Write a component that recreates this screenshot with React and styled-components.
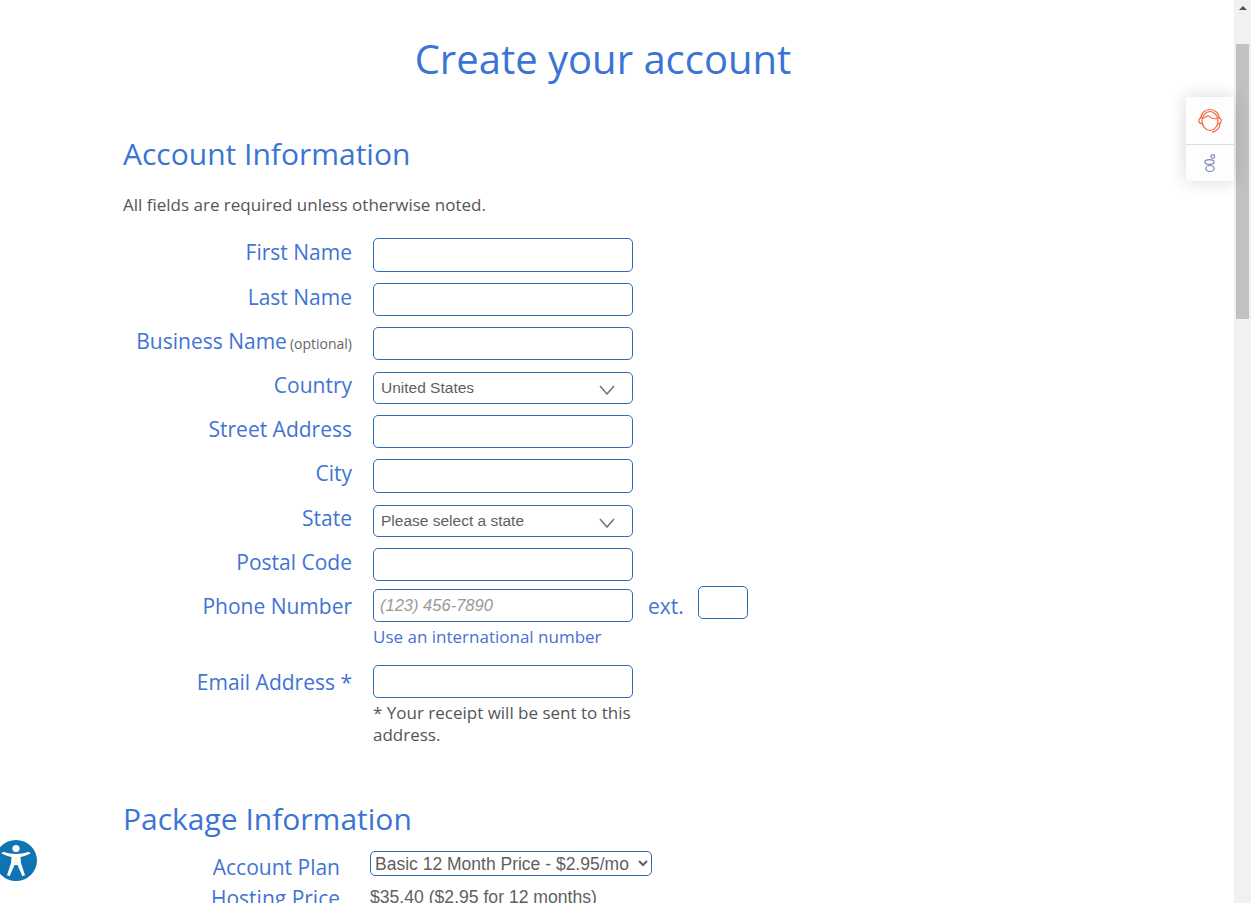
import React from 'react'
import styled, { createGlobalStyle } from 'styled-components'

const GlobalStyle = createGlobalStyle`
html, body {
  margin: 0;
  height: 100%;
  overflow: hidden;
  background: #fff;
}
* { box-sizing: border-box; }
`
const Page = styled.div`
width: 1234px;
height: 903px;
overflow: hidden;
font-family: "Open Sans", sans-serif;
color: #555;
`
const Container = styled.main`
width: 960px;
margin-left: 123px;
`
const Title = styled.h1`
margin: 0;
padding-top: 32px;
height: 133px;
text-align: center;
font-size: 40px;
line-height: 54px;
font-weight: 400;
color: #3a74d4;
`
const SectionTitle = styled.h2`
margin: 0;
font-size: 30px;
line-height: 41px;
font-weight: 400;
color: #3a74d4;
`
const Note = styled.p`
margin: 0;
padding-top: 19px;
height: 64px;
font-size: 17px;
line-height: 23px;
color: #555;
`
const Row = styled.div`
display: grid;
grid-template-columns: 229px 260px auto;
column-gap: 21px;
align-items: start;
height: ${p => p.$height}px;
`
const Label = styled.label`
text-align: right;
font-size: 21px;
line-height: 28px;
color: #3f74d4;
margin-top: ${p => p.$top || 0}px;
`
const Optional = styled.span`
font-size: 14px;
color: #666;
margin-left: 3px;
`
const Input = styled.input`
display: block;
width: 260px;
height: ${p => p.$height || 33}px;
border: 1px solid #2e6db4;
border-radius: 5px;
background: #fff;
padding: 0 6px;
outline: none;
font-family: "Liberation Sans", sans-serif;
font-size: 16.5px;
&::placeholder {
  font-style: italic;
  color: #999;
  opacity: 1;
}
`
const SelectBox = styled.div`
position: relative;
width: 260px;
height: 32px;
`
const FlatSelect = styled.select`
appearance: none;
display: block;
width: 100%;
height: 100%;
border: 1px solid #2e6db4;
border-radius: 5px;
background: #fff;
padding: 0 7px 2px;
font-family: "Liberation Sans", sans-serif;
font-size: 15.5px;
color: #5f5f5f;
outline: none;
`
const Chevron = styled.svg`
position: absolute;
right: 18px;
top: 13px;
width: 16px;
height: 10px;
pointer-events: none;
`
const PhoneColumn = styled.div`
display: flex;
flex-direction: column;
`
const IntlLink = styled.a`
font-size: 17px;
line-height: 22px;
margin-top: 4px;
color: #4a6fd4;
`
const ExtGroup = styled.div`
display: flex;
gap: 14px;
margin-left: -6px;
margin-top: -3px;
`
const ExtLabel = styled.span`
font-size: 21px;
line-height: 40px;
color: #3f74d4;
`
const ExtInput = styled(Input)`
width: 50px;
`
const Hint = styled.p`
margin: 4px 0 0;
font-size: 17px;
line-height: 22px;
color: #555;
`
const PackageSection = styled.section`
padding-top: 43px;
`
const PlanRow = styled.div`
display: grid;
grid-template-columns: 217px auto;
column-gap: 30px;
align-items: start;
margin-top: ${p => p.$top || 0}px;
`
const PlanLabel = styled.div`
text-align: right;
font-size: 21px;
line-height: 30px;
color: #3f74d4;
padding-top: 1px;
`
const PlanSelect = styled.select`
display: block;
width: 282px;
height: 25px;
border: 1px solid #2e6db4;
border-radius: 5px;
background: #fff;
font-family: "Liberation Sans", sans-serif;
font-size: 17.5px;
color: #5f5f5f;
outline: none;
`
const PlanValue = styled.div`
padding-top: 3px;
font-family: "Liberation Sans", sans-serif;
font-size: 17.6px;
line-height: 24px;
color: #5f5f5f;
`
const Scrollbar = styled.div`
position: fixed;
top: 0;
right: 0;
width: 17px;
height: 903px;
background: #f1f1f1;
`
const ScrollArrow = styled.div`
margin: 6px auto 0;
width: 0;
height: 0;
border-left: 4px solid transparent;
border-right: 4px solid transparent;
border-bottom: 4px solid #505050;
`
const ScrollThumb = styled.div`
margin: 34px 2px 0;
height: 275px;
background: #c1c1c1;
`
const SideWidget = styled.aside`
position: fixed;
top: 97px;
left: 1186px;
width: 48px;
height: 84px;
background: #fdfdfe;
box-shadow: 0 0 18px rgba(0, 0, 0, 0.16);
`
const WidgetCell = styled.div`
height: ${p => p.$height}px;
display: flex;
align-items: center;
justify-content: center;
border-bottom: ${p => (p.$divided ? '1px solid #d8dfea' : 'none')};
`
const A11yButton = styled.div`
position: fixed;
left: -5px;
top: 840px;
width: 42px;
height: 41px;
`

const fields = [
  { label: 'First Name', height: 45, inputHeight: 34 },
  { label: 'Last Name', height: 44 },
  { label: 'Business Name', optional: true, height: 45 },
  { label: 'Country', select: 'United States', height: 43 },
  { label: 'Street Address', height: 44 },
  { label: 'City', height: 46, inputHeight: 34 },
  { label: 'State', select: 'Please select a state', height: 43 },
  { label: 'Postal Code', height: 41 }
]

const Headset = () => (
  <svg width="26" height="26" viewBox="0 0 26 26" fill="none" stroke="#f2683f" strokeWidth="1.2">
    <path d="M3.5 11 C4 5 8 1.5 13 1.5 C18 1.5 22 5 22.5 11" />
    <ellipse cx="13" cy="13" rx="8" ry="9.5" />
    <path d="M5.2 10.5 C8 10 10 7 12 8 C14 10.5 18 11 21 10.5" />
    <path d="M4.5 9.5 C2.5 10.5 1.5 12.5 2 14 C2.4 15.3 3.5 15.7 5 15.5" />
    <path d="M21.5 9.5 C23.5 10.5 24.5 12.5 24 14 C23.6 15.3 22.5 15.7 21 15.5" />
    <path d="M23 15.5 C22.8 20 19.5 24 15 24.2" />
  </svg>
)

const ChatBubbles = () => (
  <svg width="12" height="19" viewBox="0 0 12 19" fill="none" stroke="#7d89b3" strokeWidth="1.2">
    <circle cx="8.8" cy="2.4" r="1.8" />
    <ellipse cx="5.5" cy="8" rx="4.6" ry="2.4" />
    <ellipse cx="6" cy="14.5" rx="4.2" ry="3" />
  </svg>
)

const AccessIcon = () => (
  <svg width="42" height="41" viewBox="0 0 42 41">
    <ellipse cx="21" cy="20.5" rx="21" ry="20.5" fill="#0f74b3" />
    <circle cx="21" cy="8.5" r="3.6" fill="#fff" />
    <path
      fill="#fff"
      d="M6.5 13.5 L8 11.8 C13 13.2 17 14 21 14 C25 14 29 13.2 34 11.8 L35.5 13.5 C31.5 15.5 28.5 16.4 25.5 17 L26 23 L30 35.2 L27.4 36.2 L22.5 25 L19.5 25 L14.6 36.2 L12 35.2 L16 23 L16.5 17 C13.5 16.4 10.5 15.5 6.5 13.5 Z"
    />
  </svg>
)

const App = () => {
  return (
    <Page>
      <GlobalStyle />
      <Container>
        <Title>Create your account</Title>
        <SectionTitle>Account Information</SectionTitle>
        <Note>All fields are required unless otherwise noted.</Note>
        {fields.map(f => (
          <Row key={f.label} $height={f.height}>
            <Label $top={f.select ? -1 : 0}>
              {f.label}
              {f.optional && <Optional>(optional)</Optional>}
            </Label>
            {f.select ? (
              <SelectBox>
                <FlatSelect defaultValue={f.select}>
                  <option>{f.select}</option>
                </FlatSelect>
                <Chevron viewBox="0 0 16 10" fill="none" stroke="#777" strokeWidth="1.6">
                  <path d="M1 1 L8 9 L15 1" />
                </Chevron>
              </SelectBox>
            ) : (
              <Input $height={f.inputHeight} />
            )}
          </Row>
        ))}
        <Row $height={76}>
          <Label $top={3}>Phone Number</Label>
          <PhoneColumn>
            <Input placeholder="(123) 456-7890" />
            <IntlLink>Use an international number</IntlLink>
          </PhoneColumn>
          <ExtGroup>
            <ExtLabel>ext.</ExtLabel>
            <ExtInput />
          </ExtGroup>
        </Row>
        <Row $height={90}>
          <Label $top={3}>Email Address *</Label>
          <div>
            <Input />
            <Hint>* Your receipt will be sent to this address.</Hint>
          </div>
        </Row>
        <PackageSection>
          <SectionTitle>Package Information</SectionTitle>
          <PlanRow $top={12}>
            <PlanLabel>Account Plan</PlanLabel>
            <PlanSelect defaultValue="basic">
              <option value="basic">Basic 12 Month Price - $2.95/mo</option>
            </PlanSelect>
          </PlanRow>
          <PlanRow>
            <PlanLabel>Hosting Price</PlanLabel>
            <PlanValue>$35.40 ($2.95 for 12 months)</PlanValue>
          </PlanRow>
        </PackageSection>
      </Container>
      <Scrollbar>
        <ScrollArrow />
        <ScrollThumb />
      </Scrollbar>
      <SideWidget>
        <WidgetCell $height={48} $divided>
          <Headset />
        </WidgetCell>
        <WidgetCell $height={36}>
          <ChatBubbles />
        </WidgetCell>
      </SideWidget>
      <A11yButton>
        <AccessIcon />
      </A11yButton>
    </Page>
  )
}

export default App
